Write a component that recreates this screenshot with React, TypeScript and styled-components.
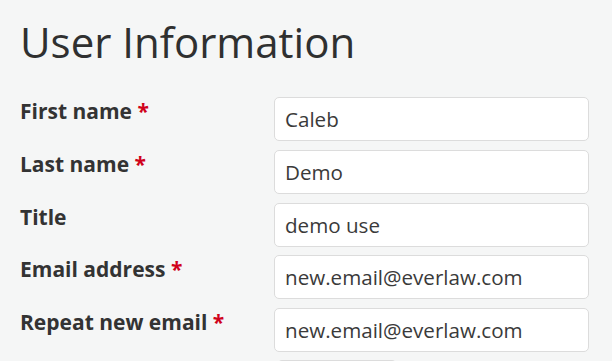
import React from 'react';
import styled, { createGlobalStyle } from 'styled-components';

const GlobalStyle = createGlobalStyle`
  html, body {
    margin: 0;
    padding: 0;
    background: #f5f6f6;
  }
  body {
    font-family: 'Open Sans', 'Noto Sans', sans-serif;
    color: #333;
  }
`;

const Page = styled.div`
  padding: 13px 20px 0 20px;
  height: 361px;
  box-sizing: border-box;
  overflow: hidden;
`;

const Title = styled.h1`
  margin: 0 0 27px 0;
  font-size: 42px;
  font-weight: 400;
  line-height: 57px;
  color: #2f3030;
`;

const Form = styled.div`
  display: grid;
  grid-template-columns: 254px 315px;
  row-gap: 8.75px;
`;

const Label = styled.label`
  font-size: 21px;
  font-weight: 700;
  line-height: 28px;
  color: #333;
`;

const Required = styled.span`
  color: #d0021b;
`;

const Input = styled.input`
  box-sizing: border-box;
  height: 44px;
  width: 100%;
  margin: 0;
  padding: 0 10px;
  border: 1px solid #dcdcdc;
  border-radius: 5px;
  background: #fff;
  font-family: 'Open Sans', 'Noto Sans', sans-serif;
  font-size: 20.6px;
  color: #3a3a3a;
  outline: none;
`;

const Button = styled.div`
  grid-column: 2;
  width: 118px;
  height: 40px;
  margin: -1px 0 0 3px;
  border: 1px solid #dcdcdc;
  border-radius: 5px;
  background: #eceded;
`;

const fields = [
  { label: 'First name', value: 'Caleb', required: true },
  { label: 'Last name', value: 'Demo', required: true },
  { label: 'Title', value: 'demo use', required: false },
  { label: 'Email address', value: 'new.email@everlaw.com', required: true },
  { label: 'Repeat new email', value: 'new.email@everlaw.com', required: true },
];

function App() {
  return (
    <>
      <GlobalStyle />
      <Page>
        <Title>User Information</Title>
        <Form>
          {fields.map((f) => (
            <React.Fragment key={f.label}>
              <Label>
                {f.label}
                {f.required && <Required> *</Required>}
              </Label>
              <Input defaultValue={f.value} readOnly />
            </React.Fragment>
          ))}
          <Button />
        </Form>
      </Page>
    </>
  );
}

export default App;
